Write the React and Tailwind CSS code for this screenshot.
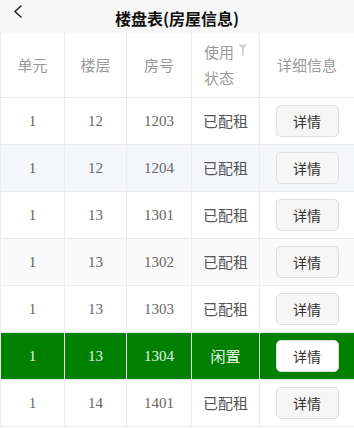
import React from "react";

const COLS = ["w-[64px]", "w-[62px]", "w-[65px]", "w-[68px]", "flex-1"];

const ROWS = [
  { unit: "1", floor: "12", room: "1203", status: "已配租", bg: "bg-white" },
  { unit: "1", floor: "12", room: "1204", status: "已配租", bg: "bg-[#f4f6fa]" },
  { unit: "1", floor: "13", room: "1301", status: "已配租", bg: "bg-white" },
  { unit: "1", floor: "13", room: "1302", status: "已配租", bg: "bg-[#fafafa]" },
  { unit: "1", floor: "13", room: "1303", status: "已配租", bg: "bg-white" },
  { unit: "1", floor: "13", room: "1304", status: "闲置", bg: "bg-[#008000]", active: true },
  { unit: "1", floor: "14", room: "1401", status: "已配租", bg: "bg-white" },
];

const sans = "font-['Noto_Sans_CJK_SC',sans-serif]";
const serif = "font-['Liberation_Serif','Noto_Sans_CJK_SC',serif]";

function Row({ row }) {
  const num = row.active ? "text-[#e6f2e6]" : "text-[#666]";
  const cell = "h-full flex items-center justify-center border-r border-[#ececec]";
  return (
    <div className={`flex h-[47px] border-b border-[#ececec] ${row.bg}`}>
      <div className={`${COLS[0]} ${cell} ${serif} text-[15px] ${num}`}>{row.unit}</div>
      <div className={`${COLS[1]} ${cell} ${serif} text-[15px] ${num}`}>{row.floor}</div>
      <div className={`${COLS[2]} ${cell} ${serif} text-[15px] ${num}`}>{row.room}</div>
      <div className={`${COLS[3]} ${cell} ${sans} text-[15px] ${row.active ? "text-[#eef6ee]" : "text-[#555]"}`}>
        {row.status}
      </div>
      <div className={`${COLS[4]} h-full flex items-center justify-center`}>
        <button
          className={`w-[63px] h-[32px] rounded-[5px] border border-[#dedede] ${sans} text-[14px] text-[#333] ${
            row.active ? "bg-white" : "bg-[#f6f6f6]"
          }`}
        >
          详情
        </button>
      </div>
    </div>
  );
}

export default function App() {
  return (
    <div className="w-[354px] h-[428px] overflow-hidden bg-white">
      {/* top bar */}
      <div className="relative h-[33px] bg-[#f7f7f7] flex items-center justify-center">
        <svg
          className="absolute left-[12px] top-[4px]"
          width="12"
          height="16"
          viewBox="0 0 12 16"
          fill="none"
        >
          <path d="M9.5 1.5 L3 7.5 L9.5 13.5" stroke="#222" strokeWidth="1.5" />
        </svg>
        <span className={`${sans} text-[16px] font-bold text-[#111] mt-[2px]`}>
          楼盘表(房屋信息)
        </span>
      </div>

      {/* table */}
      <div className="border-l border-[#ececec]">
        <div className={`flex h-[65px] border-b border-[#ececec] bg-white ${sans} text-[15px] text-[#9a9a9a]`}>
          <div className={`${COLS[0]} flex items-center justify-center border-r border-[#ececec]`}>单元</div>
          <div className={`${COLS[1]} flex items-center justify-center border-r border-[#ececec]`}>楼层</div>
          <div className={`${COLS[2]} flex items-center justify-center border-r border-[#ececec]`}>房号</div>
          <div className={`${COLS[3]} flex items-center pl-[12px] gap-[4px] border-r border-[#ececec]`}>
            <div className="leading-[26px]">
              使用
              <br />
              状态
            </div>
            <svg className="self-start mt-[11px]" width="10" height="12" viewBox="0 0 10 12">
              <path d="M0.5 0.5 H9.5 L6 4.5 V11.5 H4 V4.5 Z" fill="#d4d4d4" />
            </svg>
          </div>
          <div className={`${COLS[4]} flex items-center justify-center`}>详细信息</div>
        </div>
        {ROWS.map((row) => (
          <Row key={row.room} row={row} />
        ))}
      </div>
    </div>
  );
}
